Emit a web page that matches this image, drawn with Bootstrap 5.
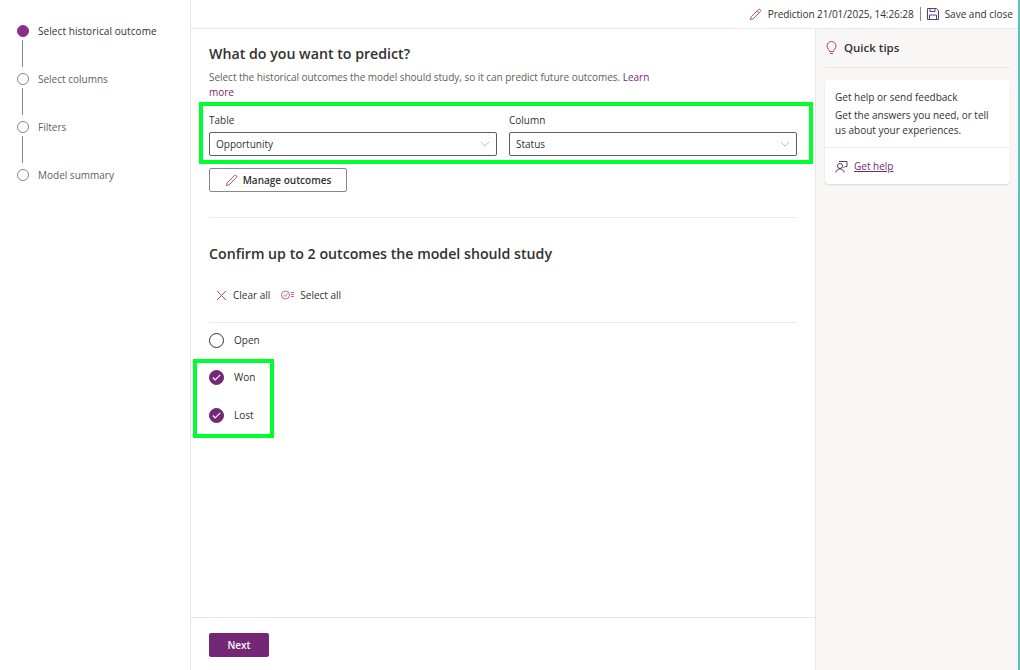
<!DOCTYPE html>
<html lang="en">
<head>
<meta charset="utf-8">
<title>Prediction</title>
<link href="https://cdn.jsdelivr.net/npm/bootstrap@5.3.0/dist/css/bootstrap.min.css" rel="stylesheet">
<style>
html,body{height:100%;margin:0;overflow:hidden}
body{font-family:"Open Sans","Noto Sans",sans-serif;font-size:10px;color:#323130;background:#fff}
.shell{height:670px;width:1020px;border-right:2px solid #5fc0ba}
.side-rail{width:191px;border-right:1px solid #e8e8e8;padding:25px 0 0 17px;flex:none}
.step{height:12px;gap:9px;line-height:12px;color:#605e5c;white-space:nowrap}
.step.on{color:#323130;font-weight:500;letter-spacing:.08px}
.dot{width:12px;height:12px;border-radius:50%;border:1px solid #8a8886;flex:none}
.on .dot{background:#8a2d8c;border-color:#8a2d8c}
.connector{width:1px;height:27px;background:#8a8886;margin:3px 0 6px 5px}
.topstrip{height:29px;border-bottom:1px solid #e8e8e8;padding-right:5px;gap:6px;color:#323130;flex:none}
.topstrip svg{flex:none}
.stamp{letter-spacing:-.06px}
.pipe{width:1px;height:14px;background:#8a8886}
.work{min-height:0}
.main-pane{padding:0;width:624px;flex:none}
.form-area{padding:0 18px;flex:1 1 auto}
.title-one{font-size:14.2px;font-weight:600;line-height:20px;margin:15px 0 0;color:#323130}
.intro{font-size:10px;line-height:15px;margin:6px 0 0;width:448px;color:#605e5c;letter-spacing:-.03px}
.intro a{color:#742774;text-decoration:none}
.hl-fields{border:4px solid #00ff2e;margin:2px -16px 0 -10px;padding:7px 8px 0 6px;height:62px;gap:12px}
.fld{width:288px;flex:none}
.fld-label{font-weight:500;line-height:14px;margin-bottom:5px;color:#323130;font-size:10px}
.pick{height:24px;border:1px solid #605e5c;border-radius:2px;padding:0 6px;color:#323130}
.btn.btn-manage{--bs-btn-font-size:10px;width:138px;height:24px;margin-top:4px;border:1px solid #8a8886;border-radius:2px;padding:0;gap:5px;color:#323130;font-weight:600;background:#fff}
.rule{height:1px;background:#edebe9}
.title-two{font-size:14.2px;font-weight:600;line-height:20px;margin:26px 0 0;color:#323130}
.tools{margin:21px 0 0 7px;height:20px;gap:11px}
.tools span.tool{gap:6px;color:#323130}
.opt{height:16px;gap:10px;color:#323130}
.ring{width:15px;height:15px;border-radius:50%;border:1px solid #323130;flex:none}
.ring.ok{background:#742774;border-color:#742774}
.hl-picks{border:4px solid #00ff2e;width:81px;height:79px;margin:11px 0 0 -16px;padding:6px 0 0 12px}
.pane-foot{height:53px;border-top:1px solid #e8e8e8;padding:15px 0 0 18px;flex:none}
.btn.btn-next{--bs-btn-font-size:10px;width:60px;height:24px;padding:0;border:0;border-radius:2px;background:#742774;color:#fff;font-weight:600}
.tips{width:203px;background:#f8f7f6;border-left:1px solid #e8e8e8;padding:0 8px 0 9px;flex:none}
.tips-head{height:39px;gap:7px;padding:0 0 0 1px;font-size:11.5px;font-weight:600;border-bottom:1px solid #e8e8e8;color:#323130;margin-top:0}
.tipcard{margin-top:12px;height:104px;background:#fff;border:0;border-radius:4px;box-shadow:0 1px 2px rgba(0,0,0,.12)}
.tipcard-body{padding:10px 10px 0;height:68px;line-height:15px;border-bottom:1px solid #edebe9}
.tipcard-body b{font-weight:500;display:block;margin-bottom:3px;line-height:15px}
.tipcard-foot{padding:0 10px;gap:6px;height:36px}
.tipcard-foot a{color:#742774}
</style>
</head>
<body>
<div class="shell d-flex">
  <nav class="side-rail">
    <div class="step on d-flex align-items-center"><span class="dot"></span>Select historical outcome</div>
    <div class="connector"></div>
    <div class="step d-flex align-items-center"><span class="dot"></span>Select columns</div>
    <div class="connector"></div>
    <div class="step d-flex align-items-center"><span class="dot"></span>Filters</div>
    <div class="connector"></div>
    <div class="step d-flex align-items-center"><span class="dot"></span>Model summary</div>
  </nav>
  <div class="flex-grow-1 d-flex flex-column">
    <header class="topstrip d-flex align-items-center justify-content-end">
      <svg width="13" height="13" viewBox="0 0 14 14" fill="none" stroke="#a8447f" stroke-width="1"><path d="M1.500 12.500l.8-3L10 1.800a1.400 1.400 0 0 1 2.100 2.100L4.500 11.700z"/><path d="M9 3l2 2"/></svg>
      <span class="stamp">Prediction 21/01/2025, 14:26:28</span>
      <span class="pipe"></span>
      <svg width="12" height="12" viewBox="0 0 12 12" fill="none" stroke="#5c3a8c" stroke-width="1"><path d="M.5.500h9l2 2v9H.5z"/><path d="M3 .500v3h5v-3M2.500 11.500V7h7v4.500"/></svg>
      <span>Save and close</span>
    </header>
    <div class="work d-flex flex-grow-1">
      <main class="main-pane d-flex flex-column">
        <div class="form-area">
          <h1 class="title-one">What do you want to predict?</h1>
          <p class="intro">Select the historical outcomes the model should study, so it can predict future outcomes. <a href="#">Learn more</a></p>
          <div class="hl-fields d-flex">
            <div class="fld">
              <div class="fld-label">Table</div>
              <div class="pick d-flex align-items-center justify-content-between">Opportunity
                <svg width="10" height="6" viewBox="0 0 12 7" fill="none" stroke="#a3b3c2"><path d="M1 1l5 5 5-5"/></svg>
              </div>
            </div>
            <div class="fld">
              <div class="fld-label">Column</div>
              <div class="pick d-flex align-items-center justify-content-between">Status
                <svg width="10" height="6" viewBox="0 0 12 7" fill="none" stroke="#a3b3c2"><path d="M1 1l5 5 5-5"/></svg>
              </div>
            </div>
          </div>
          <button type="button" class="btn btn-manage d-flex align-items-center justify-content-center">
            <svg width="13" height="13" viewBox="0 0 14 14" fill="none" stroke="#a8447f"><path d="M1.500 12.500l.8-3L10 1.800a1.400 1.400 0 0 1 2.100 2.100L4.500 11.700z"/></svg>
            Manage outcomes
          </button>
          <div class="rule" style="margin-top:25px"></div>
          <h2 class="title-two">Confirm up to 2 outcomes the model should study</h2>
          <div class="tools d-flex align-items-center">
            <span class="tool d-flex align-items-center"><svg width="11" height="11" viewBox="0 0 11 11" stroke="#a8447f" fill="none"><path d="M1 1l9 9M10 1l-9 9"/></svg>Clear all</span>
            <span class="tool d-flex align-items-center"><svg width="13" height="10" viewBox="0 0 13 10" stroke="#a8447f" fill="none" stroke-width=".8"><circle cx="4.500" cy="5" r="4"/><path d="M2.500 5l1.500 1.500L6.500 3.500M10 2.500h3M10 4.500h3M10 6.500h3"/></svg>Select all</span>
          </div>
          <div class="rule" style="margin-top:17px"></div>
          <div class="opt d-flex align-items-center" style="margin-top:9px"><span class="ring"></span>Open</div>
          <div class="hl-picks">
            <div class="opt d-flex align-items-center"><span class="ring ok d-flex align-items-center justify-content-center"><svg width="9" height="7" viewBox="0 0 9 7" fill="none" stroke="#fff" stroke-width="1.200"><path d="M.8 3.500l2.400 2.400L8.200.8"/></svg></span>Won</div>
            <div class="opt d-flex align-items-center" style="margin-top:22px"><span class="ring ok d-flex align-items-center justify-content-center"><svg width="9" height="7" viewBox="0 0 9 7" fill="none" stroke="#fff" stroke-width="1.200"><path d="M.8 3.500l2.400 2.400L8.200.8"/></svg></span>Lost</div>
          </div>
        </div>
        <div class="pane-foot"><button type="button" class="btn btn-next">Next</button></div>
      </main>
      <aside class="tips">
        <div class="tips-head d-flex align-items-center">
          <svg width="11" height="14" viewBox="0 0 11 14" fill="none" stroke="#a8447f"><path d="M3.500 10.500C3.500 8.500 1 8 1 5a4.500 4.500 0 0 1 9 0c0 3-2.500 3.500-2.500 5.500zM4 12.500h3"/></svg>
          Quick tips
        </div>
        <div class="tipcard">
          <div class="tipcard-body"><b>Get help or send feedback</b>Get the answers you need, or tell us about your experiences.</div>
          <div class="tipcard-foot d-flex align-items-center">
            <svg width="13" height="13" viewBox="0 0 13 13" fill="none" stroke="#5c3a5c"><circle cx="5" cy="6" r="2.500"/><path d="M.8 12.500c.4-2.500 2-3.500 4.200-3.500s3.800 1 4.200 3.500M4 1.500h8v5H10L8.500 8"/></svg>
            <a href="#">Get help</a>
          </div>
        </div>
      </aside>
    </div>
  </div>
</div>
</body>
</html>
